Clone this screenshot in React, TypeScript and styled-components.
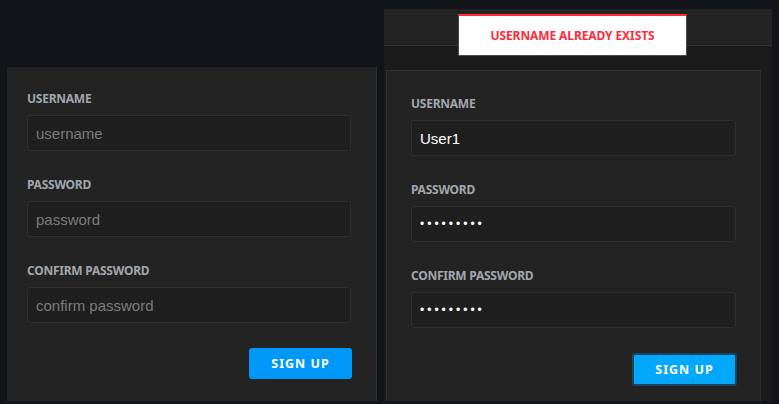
import React from "react";
import styled, { createGlobalStyle } from "styled-components";

const GlobalStyle = createGlobalStyle`
  html, body { margin: 0; padding: 0; background: #111419; overflow: hidden; }
  * { box-sizing: border-box; }
`;

const Page = styled.div`
  display: flex;
  gap: 7px;
  height: 404px;
  padding: 0 0 3px 7px;
`;

const LeftColumn = styled.div`
  display: flex;
  padding-top: 67px;
`;

const Panel = styled.div`
  width: 370px;
  background: #232323;
  border-right: 1px solid #303030;
  padding: 24px 25px 0 20px;
  display: flex;
  flex-direction: column;
`;

const RightColumn = styled.div`
  position: relative;
  width: 388px;
  margin-top: 9px;
  background: #1b1b1b;
  display: flex;
  flex-direction: column;
`;

const Header = styled.div`
  height: 37px;
  background: #232323;
  border-bottom: 1px solid #333333;
`;

const Body = styled.div`
  flex: 1;
  display: flex;
  padding: 24px 11px 0 2px;
`;

const Card = styled.div`
  width: 375px;
  background: #232323;
  border: 1px solid #2f2f2f;
  border-bottom: none;
  padding: 25px 24px 0 24px;
  display: flex;
  flex-direction: column;
`;

const Field = styled.div`
  display: flex;
  flex-direction: column;
  margin-bottom: 26px;
`;

const Label = styled.label`
  font-family: "Noto Sans", "Open Sans", sans-serif;
  font-weight: 700;
  font-size: 12px;
  letter-spacing: -0.25px;
  line-height: 16px;
  color: #a2a7ad;
  margin-bottom: 8px;
`;

const Input = styled.input<{ $masked?: boolean }>`
  height: 36px;
  width: 100%;
  background: #1f1f1f;
  border: 1px solid #303030;
  border-radius: 3px;
  padding: 0 8px;
  font-family: "Liberation Sans", Arial, sans-serif;
  font-size: ${(p) => (p.$masked ? "12px" : "15px")};
  color: #ffffff;
  outline: none;
  letter-spacing: ${(p) => (p.$masked ? "3px" : "0")};
  &::placeholder {
    color: #7c7c7c;
    letter-spacing: 0;
    font-size: 15px;
  }
`;

const Actions = styled.div`
  display: flex;
  justify-content: flex-end;
  margin-top: -1px;
`;

const Button = styled.button<{ $focused?: boolean }>`
  width: ${(p) => (p.$focused ? "105px" : "103px")};
  height: ${(p) => (p.$focused ? "33px" : "31px")};
  margin-right: -1px;
  background: ${(p) => (p.$focused ? "#04a8fb" : "#0098f8")};
  border: ${(p) => (p.$focused ? "2px solid #1a4560" : "none")};
  border-radius: 3px;
  color: #ffffff;
  font-family: "Noto Sans", "Open Sans", sans-serif;
  font-weight: 700;
  font-size: 12.5px;
  letter-spacing: 1px;
  cursor: pointer;
  padding: 0;
`;

const Toast = styled.div`
  position: absolute;
  left: 74px;
  top: 5px;
  width: 229px;
  height: 42px;
  background: #ffffff;
  border: 1px solid #4a4a4a;
  border-top: 2px solid #ff2b3b;
  display: flex;
  align-items: center;
  justify-content: center;
  font-family: "Noto Sans", "Open Sans", sans-serif;
  font-weight: 700;
  font-size: 12px;
  letter-spacing: -0.1px;
  color: #ff2b3b;
`;

type FormProps = {
  filled?: boolean;
};

const FormFields: React.FC<FormProps> = ({ filled }) => (
  <>
    <Field>
      <Label>USERNAME</Label>
      {filled ? (
        <Input defaultValue="User1" />
      ) : (
        <Input placeholder="username" />
      )}
    </Field>
    <Field>
      <Label>PASSWORD</Label>
      {filled ? (
        <Input type="password" $masked defaultValue="password1" />
      ) : (
        <Input type="password" placeholder="password" />
      )}
    </Field>
    <Field>
      <Label>CONFIRM PASSWORD</Label>
      {filled ? (
        <Input type="password" $masked defaultValue="password1" />
      ) : (
        <Input type="password" placeholder="confirm password" />
      )}
    </Field>
    <Actions>
      <Button $focused={filled}>SIGN UP</Button>
    </Actions>
  </>
);

export default function App() {
  return (
    <>
      <GlobalStyle />
      <Page>
        <LeftColumn>
          <Panel>
            <FormFields />
          </Panel>
        </LeftColumn>
        <RightColumn>
          <Header />
          <Body>
            <Card>
              <FormFields filled />
            </Card>
          </Body>
          <Toast>USERNAME ALREADY EXISTS</Toast>
        </RightColumn>
      </Page>
    </>
  );
}
